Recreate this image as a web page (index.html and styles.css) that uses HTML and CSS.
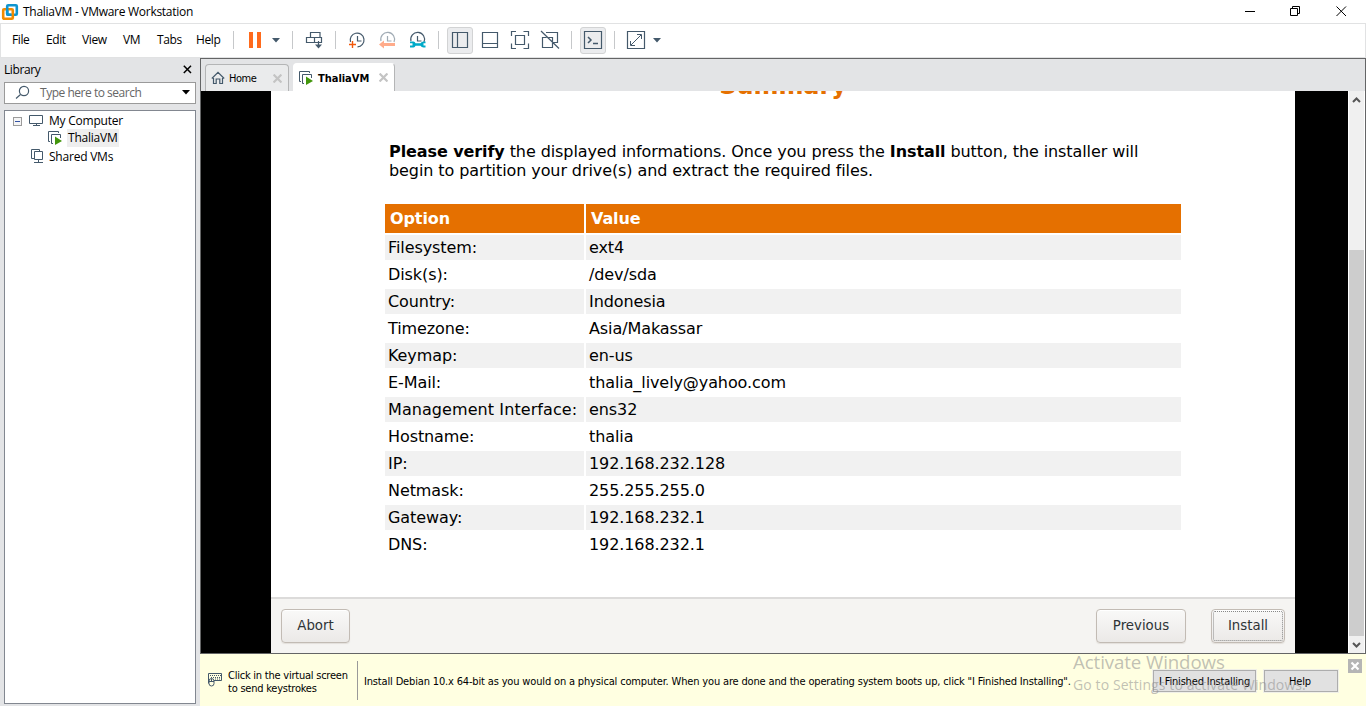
FILE: index.html
```html
<!DOCTYPE html>
<html lang="en">
<head>
<meta charset="utf-8">
<title>ThaliaVM - VMware Workstation</title>
<link rel="stylesheet" href="styles.css">
</head>
<body>
<header class="titlebar">
  <svg class="logo" width="18" height="18" viewBox="1 2 18 18" fill="none" stroke-width="2.6"><rect x="7.2" y="4.2" width="9.6" height="9.6" rx="1" stroke="#0f95cf"/><rect x="3.2" y="8.2" width="9.6" height="9.6" rx="1" stroke="#f38b00"/><path d="M7.2 7v5.800q0 1 1 1h3" stroke="#0f95cf"/></svg>
  <span class="title">ThaliaVM - VMware Workstation</span>
  <div class="window-controls">
    <svg width="122" height="20" viewBox="1240 1 122 20" fill="none" stroke="#000" stroke-width="1"><path d="M1245 10.500h10"/><path d="M1290.500 7.500h7v7h-7zM1292.500 7.500v-2h7v7h-2"/><path d="M1336.500 5.500l9.500 9.500M1346 5.500l-9.500 9.500"/></svg>
  </div>
</header>
<nav class="toolbar">
  <span class="menu">File</span><span class="menu">Edit</span><span class="menu">View</span><span class="menu">VM</span><span class="menu">Tabs</span><span class="menu">Help</span>
  <svg width="447" height="32" viewBox="230 24 447 32" fill="none" stroke="#44596b" stroke-width="1.2">
    <path d="M233.500 31v18M292.500 31v18M335.500 31v18M438.500 31v18M571.500 31v18M614.500 31v18" stroke="#c6c8ca" stroke-width="1"/>
    <path d="M249 32h4v16h-4zM257 32h4v16h-4z" fill="#ff6a1c" stroke="none"/>
    <path d="M272 38h8l-4 4.500zM653 38h8l-4 4.500z" fill="#44596b" stroke="none"/>
    <path d="M310.500 37.500v-5h9.500v5M306.500 37.500h15v5h-15zM314.500 37.500v5M318.500 41v6"/><path d="M315 44.500h7l-3.500 4z" fill="#44596b" stroke="none"/>
    <path d="M350.500 42a6.900 6.900 0 1 1 7 4.900M357.500 36v5h4"/><path d="M349 44.500h7M352.500 41v7" stroke="#f1590c" stroke-width="1.4"/>
    <g opacity=".5"><path d="M381 41a6.900 6.900 0 1 1 13 1M387.500 36v5h4"/><path d="M379 44.500l5-4v2.500h11v3h-11v2.500z" fill="#ff5a18" stroke="none"/></g>
    <path d="M411 41a6.900 6.900 0 1 1 13 1M417.500 36v5h4"/><path d="M410 41.500h3.500q1.500 0 2 1.700h5q1-1.700 3-1.700h2v1.800h-2v2.200h2v2h-2q-2 0-3-1.700h-5q-.5 1.700-2 1.700H410v-2h2.500v-2.200H410z" fill="#00aac8" stroke="none"/>
    <rect x="447.500" y="27.500" width="25" height="26" rx="2.500" fill="#ebecee" stroke="#d2d3d4" stroke-width="1"/>
    <path d="M452.500 32.500h15v15h-15zM457.500 32.500v15"/><path d="M482.500 32.500h15v15h-15zM482.500 43.500h15"/>
    <path d="M515.500 35.500h9v9h-9zM511.500 36v-4.500h4.500M523.500 31.500h5v4.500M528.500 43.500v5h-5M516 48.500h-4.500v-5"/>
    <path d="M546 32.500h11.500v10H553M546.500 37.500h-4v10h10v-10h-4M541 31l18 17.500"/>
    <rect x="580.500" y="27.500" width="25" height="26" rx="2.500" fill="#ebecee" stroke="#d2d3d4" stroke-width="1"/>
    <path d="M584.500 31.500h17v17h-17z"/><path d="M588 37l3 3-3 3M593 43.500h5" stroke-width="1.500"/>
    <path d="M627.500 31.500h17v17h-17z"/><path d="M630.500 41v4.500h4.500M637 34.500h4.500V39M631 45l10-10" stroke-width="1"/>
  </svg>
</nav>
<div class="workspace">
  <aside class="library">
    <div class="library-head"><span>Library</span><svg width="9" height="9" viewBox="0 0 9 9" stroke="#000" stroke-width="1.500"><path d="M.8.8l7.200 7.200M8 .8L.8 8"/></svg></div>
    <div class="search">
      <svg width="16" height="16" viewBox="0 0 16 16" fill="none" stroke="#44596b" stroke-width="1.200"><circle cx="10" cy="6" r="4.600"/><path d="M6.500 9.500L2 13.500"/></svg>
      <span>Type here to search</span>
      <svg class="drop" width="8" height="5" viewBox="0 0 8 5"><path d="M0 0h8L4 4.500z"/></svg>
    </div>
    <div class="tree">
      <div class="node root"><svg width="30" height="16" viewBox="13 113 30 16" fill="none" stroke="#44596b"><rect x="13.500" y="118.500" width="8" height="8" fill="#f5f5f5" stroke="#9b9b9b"/><path d="M15 122.500h5" stroke="#3453a5"/><path d="M29.500 116.500h13v8h-13zM36.500 125v2M33 126.500h7"/></svg><span>My Computer</span></div>
      <div class="node child"><svg width="16" height="16" viewBox="0 0 16 16" fill="none" stroke="#44596b"><path d="M3 11.500H1.500v-10h10V3M6 13.500H4.500v-9h9V8"/><path d="M8 6.500l7 4.500-7 4z" fill="#42960c" stroke="none"/></svg><span class="selected">ThaliaVM</span></div>
      <div class="node shared"><svg width="13" height="15" viewBox="0 0 13 15" fill="none" stroke="#44596b"><path d="M3 9.500H.5v-9h8V3M3.500 2.500h8v8h-8zM7.500 11v2.500M3 13.500h9"/></svg><span>Shared VMs</span></div>
    </div>
  </aside>
  <main class="pane">
    <div class="tabs">
      <div class="tab home"><svg width="14" height="14" viewBox="0 0 14 14" fill="none" stroke="#44596b" stroke-width="1.200"><path d="M.8 7.500L7 1.300l6.200 6.200M2.500 7v5.500h2.700V8h3.600v4.500h2.700V7"/></svg><span>Home</span><svg class="x" width="9" height="9" viewBox="0 0 8 8"><path d="M.5.5l7 7M7.500.5l-7 7"/></svg></div>
      <div class="tab active"><svg width="16" height="16" viewBox="0 0 16 16" fill="none" stroke="#44596b"><path d="M3 11.500H1.500v-10h10V3M6 13.500H4.500v-9h9V8"/><path d="M8 6.500l7 4.500-7 4z" fill="#42960c" stroke="none"/></svg><span>ThaliaVM</span><svg class="x" width="9" height="9" viewBox="0 0 8 8"><path d="M.5.5l7 7M7.500.5l-7 7"/></svg></div>
    </div>
    <div class="screen">
      <section class="installer">
        <div class="content">
          <h1>Summary</h1>
          <p><b>Please verify</b> the displayed informations. Once you press the <b>Install</b> button, the installer will<br>begin to partition your drive(s) and extract the required files.</p>
          <table>
            <tr><th>Option</th><th>Value</th></tr>
            <tr><td>Filesystem:</td><td>ext4</td></tr>
            <tr><td>Disk(s):</td><td>/dev/sda</td></tr>
            <tr><td>Country:</td><td>Indonesia</td></tr>
            <tr><td>Timezone:</td><td>Asia/Makassar</td></tr>
            <tr><td>Keymap:</td><td>en-us</td></tr>
            <tr><td>E-Mail:</td><td>thalia_lively@yahoo.com</td></tr>
            <tr><td class="wide">Management Interface:</td><td>ens32</td></tr>
            <tr><td>Hostname:</td><td>thalia</td></tr>
            <tr><td>IP:</td><td>192.168.232.128</td></tr>
            <tr><td>Netmask:</td><td>255.255.255.0</td></tr>
            <tr><td>Gateway:</td><td>192.168.232.1</td></tr>
            <tr><td>DNS:</td><td>192.168.232.1</td></tr>
          </table>
        </div>
        <footer class="actions"><button class="abort">Abort</button><button class="previous">Previous</button><button class="install">Install</button></footer>
      </section>
      <div class="scrollbar">
        <svg width="15" height="17" viewBox="0 0 15 17" fill="none" stroke="#555" stroke-width="2"><path d="M4 11l3.500-3.500L11 11"/></svg>
        <div class="thumb"></div>
        <svg width="15" height="17" viewBox="0 0 15 17" fill="none" stroke="#555" stroke-width="2"><path d="M4 7l3.500 3.500L11 7"/></svg>
      </div>
    </div>
    <div class="hint">
      <svg class="keys" width="15" height="16" viewBox="0 0 15 16" fill="none" stroke="#44596b"><path d="M6 8.500h7.500v-7H.5v10"/><path d="M2 3.500h11M3 5.500h10M7 7h6" stroke-dasharray="1 1"/><rect x="1" y="6.500" width="5" height="7.500" rx="2.500"/><path d="M1 9.500h5M3.500 7v2.500"/></svg>
      <p class="click">Click in the virtual screen<br>to send keystrokes</p>
      <p class="message">Install Debian 10.x 64-bit as you would on a physical computer. When you are done and the operating system boots up, click "I Finished Installing".</p>
      <button class="finished">I Finished Installing</button><button class="help">Help</button>
      <svg class="close" width="14" height="14" viewBox="0 0 14 14"><path d="M0 0h14v14H0z" fill="#b5b5b5"/><path d="M3.500 3.500l7 7M10.500 3.500l-7 7" stroke="#fff" stroke-width="2.200"/></svg>
    </div>
  </main>
</div>
<div class="watermark"><div class="big">Activate Windows</div><div class="small">Go to Settings to activate Windows.</div></div>
</body>
</html>
```
FILE: styles.css
```css
* { box-sizing: border-box; }
body { margin: 0; width: 1366px; height: 706px; overflow: hidden; position: relative; display: flex; flex-direction: column; background: #e3e4e6; color: #000; font: 12px "Open Sans", sans-serif; letter-spacing: -.4px; white-space: nowrap; }
svg { display: block; flex: none; }
p, h1 { margin: 0; }
button { margin: 0; padding: 0; white-space: nowrap; color: inherit; }
.titlebar { height: 23px; flex: none; display: flex; align-items: center; background: #fff; padding: 0 4px 0 1px; }
.title { margin-left: 4px; letter-spacing: -.28px; }
.window-controls { margin-left: auto; }
.toolbar { height: 35px; flex: none; display: grid; grid-template-columns: 34px 36px 41px 34px 39px 34px 447px; align-items: start; background: #fff; border: 1px solid #e1e2e3; padding-left: 11px; }
.menu { line-height: 32px; }
.workspace { flex: 1; min-height: 0; display: grid; grid-template-columns: 200px 1166px; }
.library { padding: 0 4px 2px; display: flex; flex-direction: column; }
.library-head { height: 24px; display: flex; align-items: center; justify-content: space-between; padding-bottom: 1px; }
.library-head svg { margin-right: 4px; }
.search { height: 22px; border: 1px solid #9a9a9a; background: #fff; display: flex; align-items: center; color: #666; padding: 0 5px 1px 9px; }
.search span { margin-left: 10px; letter-spacing: -.5px; font-size: 12px; }
.search span { letter-spacing: -.48px; }
.drop { margin-left: auto; fill: #000; }
.tree { margin-top: 6px; flex: 1; border: 1px solid #828790; background: #fff; }
.node { height: 18px; display: flex; align-items: center; letter-spacing: -.22px; }
.root { padding-left: 8px; gap: 6px; }
.child { padding-left: 42px; gap: 4px; }
.selected { background: #eee; height: 18px; line-height: 18px; padding: 0 1px; }
.shared { padding-left: 26px; gap: 5px; }
.pane { display: flex; flex-direction: column; min-height: 0; }
.tabs { height: 33px; flex: none; display: flex; align-items: flex-end; padding-left: 4px; border: 1px solid #646566; border-bottom: 0; }
.tab { display: flex; align-items: center; border: 1px solid #b4b5b6; border-bottom: 0; border-radius: 4px 4px 0 0; font: 11px "DejaVu Sans Condensed", "DejaVu Sans", sans-serif; }
.home { width: 84px; height: 27px; background: #eaebec; padding: 0 6px 0 5px; }
.home span { margin-left: 4px; letter-spacing: -.5px; }
.active { margin-left: 4px; width: 102px; height: 28px; background: #fff; border-color: #fff #b4b5b6 #fff #fff; padding: 0 6px 0 4px; font-weight: bold; letter-spacing: -.03px; }
.active span { margin: 1px 0 0 4px; }
.x { margin-left: auto; stroke: #c4c4c4; stroke-width: 2; }
.screen { height: 563px; flex: none; display: flex; background: #000; border: 1px solid #646566; border-top: 0; padding-left: 70px; }
.installer { width: 1024px; background: #fff; display: flex; flex-direction: column; font: 16px "DejaVu Sans", sans-serif; letter-spacing: -.09px; }
.content { height: 506px; overflow: hidden; padding: 0 114px; }
h1 { font-size: 24px; line-height: 28px; color: #e57000; text-align: center; margin-top: -19px; }
.content p { margin: 42px 0 22px 4px; line-height: 19px; }
table { width: 800px; margin-left: -2px; border-spacing: 2px; }
th { height: 29px; background: #e57000; color: #fff; text-align: left; padding: 0 5px; line-height: 29px; }
th:first-child { width: 199px; }
td { height: 25px; line-height: 25px; padding: 0 3px; }
.wide { letter-spacing: .08px; }
tr:nth-child(even) td { background: #f1f1f1; }
.actions { height: 56px; border-top: 2px solid #dcdbda; background: #f5f4f2; padding: 10px 10px 0; display: flex; }
.actions button { height: 34px; padding-bottom: 1px; border: 1px solid #c2bbb4; border-radius: 4px; background: linear-gradient(#f9f9f8, #ebe9e7); box-shadow: inset 0 1px #fff, 0 1px 1px #e3dfdb; font: 13.33px "DejaVu Sans", sans-serif; color: #2e3436; }
.abort { width: 69px; }
.previous { width: 90px; margin-left: auto; }
.actions .install { width: 74px; margin-left: 25px; outline: 1px dotted #888; outline-offset: -3px; }
.scrollbar { width: 17px; margin-left: 53px; border: solid #fff; border-width: 0 1px; background: #f0f0f0; display: flex; flex-direction: column; }
.thumb { margin-top: 142px; height: 386px; background: #cdcdcd; }
.hint { flex: 1; background: #ffffe1; display: flex; align-items: center; padding-left: 8px; font: 11px/13px "DejaVu Sans Condensed", "DejaVu Sans", sans-serif; }
.click { margin-left: 5px; width: 129px; padding-top: 3px; letter-spacing: -.23px; }
.message { border-left: 1px solid #999; height: 39px; line-height: 41px; padding-left: 6px; width: 796px; letter-spacing: -.16px; }
.hint button { height: 22px; border: 1px solid #adadad; background: #e1e1e1; box-shadow: 0 0 0 1px #f0f0e8; font: inherit; margin-top: 2px; letter-spacing: -.18px; }
.finished { width: 103px; }
.hint .help { width: 74px; margin-left: 8px; padding-right: 2px; }
.close { margin: 5px 0 0 10px; align-self: flex-start; }
.watermark { position: absolute; left: 1073px; top: 650px; color: rgba(140, 140, 140, .55); letter-spacing: -.1px; }
.big { font-size: 18.700px; line-height: 24px; }
.small { font-size: 14px; line-height: 21px; letter-spacing: .1px; }
```
